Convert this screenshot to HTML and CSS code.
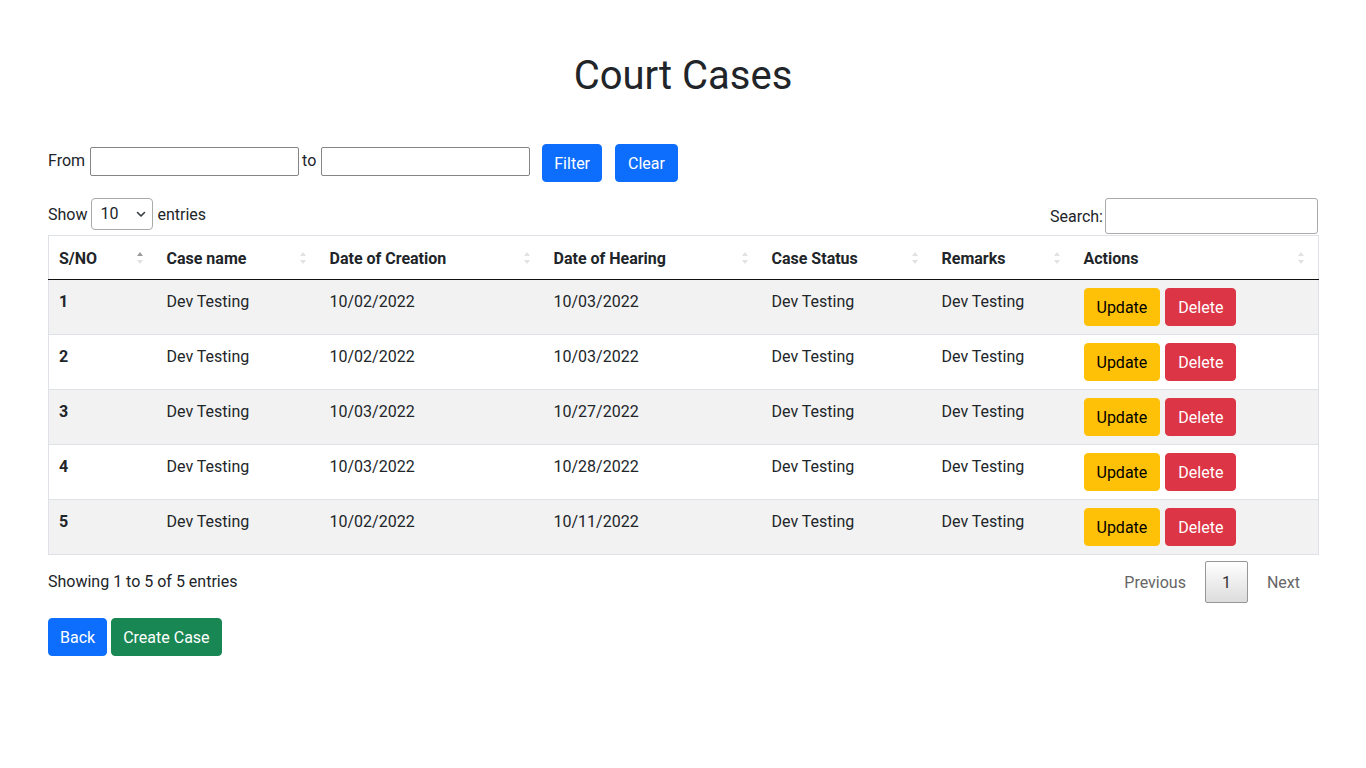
FILE: index.html
```html
<!DOCTYPE html>
<html lang="en">
<head>
<meta charset="utf-8">
<title>Court Cases</title>
<link rel="stylesheet" href="styles.css">
</head>
<body>
<div class="page">
  <h1 class="title">Court Cases</h1>

  <div class="filter-row">
    <label class="lbl">From</label>
    <input class="date-input" type="text">
    <label class="lbl to">to</label>
    <input class="date-input" type="text">
    <button class="btn btn-primary btn-filter">Filter</button>
    <button class="btn btn-primary btn-clear">Clear</button>
  </div>

  <div class="dt-top">
    <div class="dt-length">
      <span>Show</span>
      <span class="select-wrap">
        <select class="len-select"><option>10</option><option>25</option><option>50</option><option>100</option></select>
        <svg class="chev" width="10" height="7" viewBox="0 0 10 7"><path d="M1.5 1.5 L5 5 L8.5 1.5" fill="none" stroke="#343a40" stroke-width="1.6" stroke-linecap="round" stroke-linejoin="round"/></svg>
      </span>
      <span>entries</span>
    </div>
    <div class="dt-search">
      <label>Search:</label>
      <input class="search-input" type="search">
    </div>
  </div>

  <table class="dt">
    <colgroup>
      <col class="c1"><col class="c2"><col class="c3"><col class="c4"><col class="c5"><col class="c6"><col class="c7">
    </colgroup>
    <thead>
      <tr>
        <th class="sort asc">S/NO</th>
        <th class="sort">Case name</th>
        <th class="sort">Date of Creation</th>
        <th class="sort">Date of Hearing</th>
        <th class="sort">Case Status</th>
        <th class="sort">Remarks</th>
        <th class="sort">Actions</th>
      </tr>
    </thead>
    <tbody>
      <tr class="odd">
        <td class="sn">1</td><td>Dev Testing</td><td>10/02/2022</td><td>10/03/2022</td><td>Dev Testing</td><td>Dev Testing</td>
        <td class="act"><button class="btn btn-warning">Update</button><button class="btn btn-danger">Delete</button></td>
      </tr>
      <tr>
        <td class="sn">2</td><td>Dev Testing</td><td>10/02/2022</td><td>10/03/2022</td><td>Dev Testing</td><td>Dev Testing</td>
        <td class="act"><button class="btn btn-warning">Update</button><button class="btn btn-danger">Delete</button></td>
      </tr>
      <tr class="odd">
        <td class="sn">3</td><td>Dev Testing</td><td>10/03/2022</td><td>10/27/2022</td><td>Dev Testing</td><td>Dev Testing</td>
        <td class="act"><button class="btn btn-warning">Update</button><button class="btn btn-danger">Delete</button></td>
      </tr>
      <tr>
        <td class="sn">4</td><td>Dev Testing</td><td>10/03/2022</td><td>10/28/2022</td><td>Dev Testing</td><td>Dev Testing</td>
        <td class="act"><button class="btn btn-warning">Update</button><button class="btn btn-danger">Delete</button></td>
      </tr>
      <tr class="odd">
        <td class="sn">5</td><td>Dev Testing</td><td>10/02/2022</td><td>10/11/2022</td><td>Dev Testing</td><td>Dev Testing</td>
        <td class="act"><button class="btn btn-warning">Update</button><button class="btn btn-danger">Delete</button></td>
      </tr>
    </tbody>
  </table>

  <div class="dt-bottom">
    <div class="dt-info">Showing 1 to 5 of 5 entries</div>
    <div class="dt-paging">
      <span class="pg disabled">Previous</span>
      <span class="pg current">1</span>
      <span class="pg disabled">Next</span>
    </div>
  </div>

  <div class="bottom-actions">
    <button class="btn btn-primary">Back</button>
    <button class="btn btn-success">Create Case</button>
  </div>
</div>
</body>
</html>
```

FILE: styles.css
```css
* { box-sizing: border-box; }

html, body {
  margin: 0;
  padding: 0;
  background: #fff;
}

body {
  font-family: "Segoe UI", Roboto, "Liberation Sans", Arial, sans-serif;
  font-size: 16px;
  line-height: 24px;
  color: #212529;
}

.page {
  padding: 52px 48px 48px 48px;
}

.title {
  margin: 0;
  font-size: 40px;
  line-height: 48px;
  font-weight: 400;
  text-align: center;
}

.filter-row {
  display: flex;
  align-items: flex-start;
  margin-top: 44px;
  height: 38px;
}

.lbl {
  margin-right: 5px;
  padding-top: 5px;
}
.lbl.to { margin-left: 3px; margin-right: 5px; }

.date-input {
  width: 209px;
  height: 29px;
  margin-top: 3px;
  border: 1px solid #858585;
  border-radius: 2px;
  padding: 2px 4px;
  font: inherit;
  font-size: 13px;
  background: #fff;
}

.btn {
  display: inline-block;
  height: 38px;
  padding: 7px 12px 5px 12px;
  font-family: inherit;
  font-size: 16px;
  line-height: 24px;
  border: 1px solid transparent;
  border-radius: 4px;
  cursor: pointer;
}

.btn-primary { background: #0d6efd; border-color: #0d6efd; color: #fff; }
.btn-success { background: #198754; border-color: #198754; color: #fff; }
.btn-warning { background: #ffc107; border-color: #ffc107; color: #000; }
.btn-danger  { background: #dc3545; border-color: #dc3545; color: #fff; }

.btn-filter { margin-left: 12px; padding-left: 11px; padding-right: 11px; }
.btn-clear { margin-left: 13px; }

.dt-top {
  display: flex;
  justify-content: space-between;
  align-items: flex-start;
  margin-top: 16px;
  height: 37px;
}

.dt-length {
  display: flex;
  align-items: center;
  gap: 4px;
  height: 32px;
}

.dt-length > span:first-child,
.dt-length > span:last-child { padding-top: 1px; }

.select-wrap {
  position: relative;
  display: inline-block;
}

.len-select {
  appearance: none;
  -webkit-appearance: none;
  width: 62px;
  height: 32px;
  padding: 3px 8px;
  font: inherit;
  font-size: 16px;
  color: #212529;
  background: #fff;
  border: 1px solid #aaa;
  border-radius: 4px;
}

.chev {
  position: absolute;
  right: 7px;
  top: 13px;
  pointer-events: none;
}

.dt-search {
  display: flex;
  align-items: center;
  height: 36px;
  margin-right: 0;
}

.dt-search label { margin-right: 2px; padding-top: 2px; }

.search-input {
  width: 213px;
  height: 36px;
  border: 1px solid #aaa;
  border-radius: 3px;
  padding: 5px;
  font: inherit;
  background: #fff;
}

.dt {
  width: 1270px;
  border-collapse: collapse;
  table-layout: fixed;
  border: 1px solid #dee2e6;
}

.c1 { width: 108px; }
.c2 { width: 163px; }
.c3 { width: 224px; }
.c4 { width: 218px; }
.c5 { width: 170px; }
.c6 { width: 142px; }
.c7 { width: 245px; }

.dt th {
  position: relative;
  text-align: left;
  font-weight: 700;
  padding: 11px 18px 8px 10px;
  height: 44px;
  border-bottom: 1px solid #111;
  background: #fff;
}

.dt th.sort::before,
.dt th.sort::after {
  content: "";
  position: absolute;
  right: 14px;
  width: 0;
  height: 0;
  border-left: 3px solid transparent;
  border-right: 3px solid transparent;
}

.dt th.sort::before {
  top: 16px;
  border-bottom: 4px solid #e2e2e2;
}

.dt th.sort::after {
  top: 24px;
  border-top: 4px solid #e2e2e2;
}

.dt th.sort.asc::before { border-bottom-color: #9a9a9a; }

.dt td {
  padding: 10px 10px 6px 10px;
  vertical-align: top;
  height: 55px;
  border-bottom: 1px solid #dee2e6;
}

.dt td.act { padding-top: 8px; padding-bottom: 8px; }

.dt tr.odd td { background: #f2f2f2; }

.dt td.sn { font-weight: 700; }

.act .btn-warning { margin-right: 5px; }
.act { white-space: nowrap; }

.dt-bottom {
  display: flex;
  justify-content: space-between;
  align-items: flex-start;
  padding-top: 5px;
  height: 63px;
}

.dt-info {
  padding-top: 10px;
}

.dt-paging {
  display: flex;
  align-items: center;
  margin-right: 1px;
}

.pg {
  display: inline-block;
  padding: 10px 16px 8px 16px;
  line-height: 24px;
  color: #666;
  border: 1px solid transparent;
  border-radius: 2px;
  margin-left: 2px;
}

.pg.current {
  color: #333;
  border: 1px solid #979797;
  background: linear-gradient(to bottom, #fff 0%, #dcdcdc 100%);
  padding: 9px 16px 7px 16px;
  height: 42px;
}

.bottom-actions {
  display: flex;
  gap: 4px;
}

.bottom-actions .btn { padding-left: 11px; padding-right: 11px; }
```
